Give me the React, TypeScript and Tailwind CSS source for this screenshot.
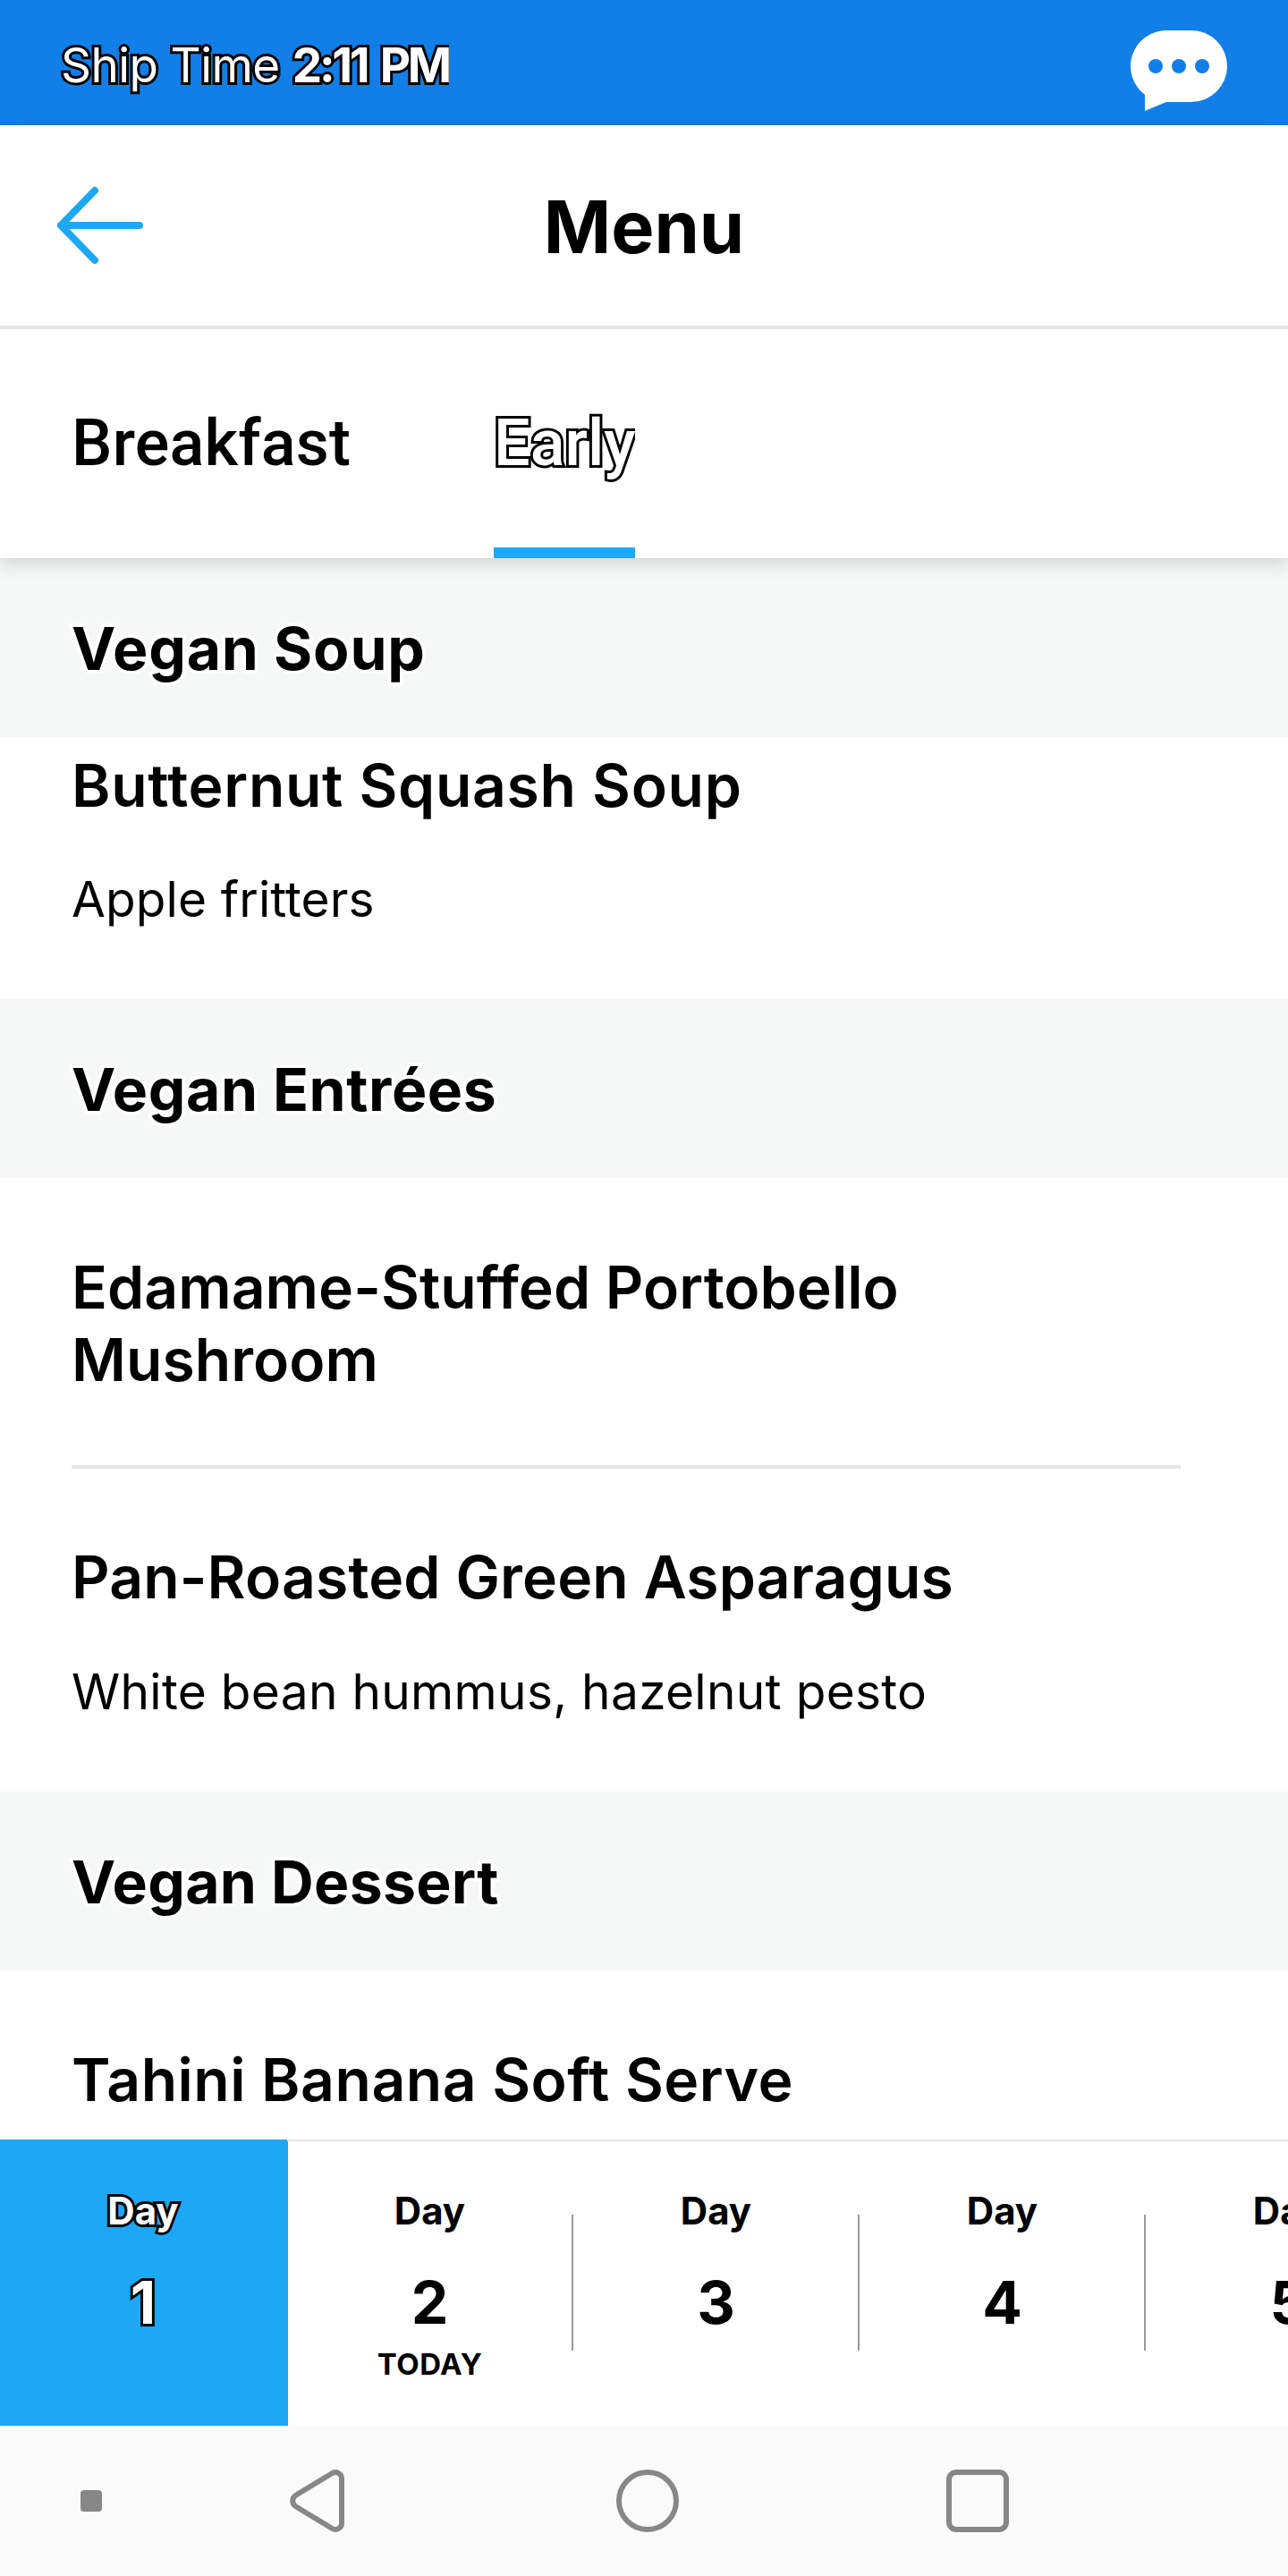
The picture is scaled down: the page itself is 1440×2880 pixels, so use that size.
import React from 'react';

const sections = [
    {
        title: "Vegan Soup",
        tracking: "tracking-[0.8px]",
        items: [
            { name: "Butternut Squash Soup", details: "Apple fritters", spacing: "pt-[14px] pb-[78px] tracking-[0.7px]", detailsSpacing: "mt-[52px] tracking-[0.1px]" },
        ]
    },
    {
        title: "Vegan Entrées",
        tracking: "tracking-[0.6px]",
        items: [
            { name: "Edamame-Stuffed Portobello Mushroom", details: "", spacing: "pt-[82px] pb-[77px] tracking-[0.05px]", detailsSpacing: "" },
            { name: "Pan-Roasted Green Asparagus", details: "White bean hummus, hazelnut pesto", spacing: "pt-[81px] pb-[78px] tracking-[0.15px]", detailsSpacing: "mt-[53px] tracking-[0.3px]" },
        ]
    },
    {
        title: "Vegan Dessert",
        tracking: "tracking-[0.3px]",
        items: [
            { name: "Tahini Banana Soft Serve", details: "", spacing: "pt-[82px] pb-[77px] tracking-[0.5px]", detailsSpacing: "" },
        ]
    },
];

const days = [
    { id: 1, active: true, today: false },
    { id: 2, active: false, today: true },
    { id: 3, active: false, today: false },
    { id: 4, active: false, today: false },
    { id: 5, active: false, today: false },
];

const ChatIcon = () => (
    <svg width="108" height="92" viewBox="0 0 108 92" fill="white">
        <path d="M40 0H68A40 40 0 0 1 68 80H40L16 90V72A40 40 0 0 1 40 0Z" />
        <circle cx="28" cy="40" r="8" fill="#127fe9" />
        <circle cx="54" cy="40" r="8" fill="#127fe9" />
        <circle cx="80" cy="40" r="8" fill="#127fe9" />
    </svg>
);

const BackArrow = () => (
    <svg width="100" height="90" viewBox="0 0 100 90" fill="none" stroke="#1ea7f4" strokeWidth="8" strokeLinecap="round" strokeLinejoin="round">
        <path d="M46 6L8 45L46 84M8 45H96" />
    </svg>
);

const App = () => {
    return (
        <div className="flex h-[2880px] w-[1440px] flex-col overflow-hidden bg-white font-['Inter',sans-serif] text-black">

            {/* Status bar */}
            <div className="flex h-[140px] shrink-0 items-center justify-between bg-[#127fe9] pl-[65px] pr-[68px]">
                <p className="overflow-hidden pt-[5px] pl-[3px] text-[53px] leading-[70px] whitespace-pre text-white [-webkit-text-stroke:6px_#000] [paint-order:stroke_fill]">
                    <span className="tracking-[-0.6px]">Ship Time </span>
                    <span className="font-bold tracking-[-3.3px] [word-spacing:5px]">2:11 PM</span>
                </p>
                <div className="pt-[20px]">
                    <ChatIcon />
                </div>
            </div>

            {/* Header and tabs */}
            <div className="relative z-10 shrink-0 bg-white shadow-[0_5px_20px_rgba(0,0,0,0.17)]">
                <div className="grid h-[228px] grid-cols-3 items-center border-b-4 border-[#e4e7e6] pl-[60px] pr-[60px]">
                    <BackArrow />
                    <h1 className="pt-[3px] text-center text-[81px] leading-[100px] font-bold">Menu</h1>
                </div>
                <div className="flex h-[256px] gap-[160px] pl-[80px] font-['Roboto',sans-serif] text-[72px] leading-[100px] font-medium">
                    <div className="w-[312px] pt-[78px] tracking-[0.2px]">Breakfast</div>
                    <div className="flex w-[158px] flex-col justify-between overflow-hidden pt-[78px]">
                        <span className="text-white [-webkit-text-stroke:6px_#000] [paint-order:stroke_fill]">Early</span>
                        <div className="h-3 bg-[#1ea7f4]" />
                    </div>
                </div>
            </div>

            {/* Menu list */}
            <div className="min-h-0 grow overflow-hidden">
                {sections.map((section) => (
                    <div key={section.title} className={section.tracking}>
                        <h2 className="h-[200px] bg-[#f6f8f8] px-[80px] pt-[61px] text-[66px] leading-[81px] font-bold [-webkit-text-stroke:7px_#fff] [paint-order:stroke_fill]">
                            {section.title}
                        </h2>
                        <div className="mr-[120px] ml-[80px] divide-y-4 divide-[#e4e7e6] tracking-normal">
                            {section.items.map((item) => (
                                <div key={item.name} className={item.spacing}>
                                    <h3 className="text-[66px] leading-[81px] font-semibold">{item.name}</h3>
                                    {item.details && (
                                        <p className={`text-[55px] leading-[68px] ${item.detailsSpacing}`}>{item.details}</p>
                                    )}
                                </div>
                            ))}
                        </div>
                    </div>
                ))}
            </div>

            <div className="flex h-[320px] shrink-0 overflow-hidden font-bold">
                {days.map((day) => (
                    <div
                        key={day.id}
                        className={day.active
                            ? "-mr-px flex w-[322px] shrink-0 bg-[#1ea7f4] text-white [-webkit-text-stroke:6px_#000] [paint-order:stroke_fill]"
                            : "flex w-[320px] shrink-0 border-t-2 border-[#e5e6ea]"}
                    >
                        <div className={day.active ? "flex grow flex-col items-center pt-[55px] pr-0.5" : "flex grow flex-col items-center pt-[53px] pr-px"}>
                            <span className="text-[42px] leading-[50px]">Day</span>
                            <span className="mt-[44px] text-[66px] leading-[66px]">{day.id}</span>
                            {day.today && <span className="mt-[19px] text-[33px] leading-[34px] tracking-[0.5px]">TODAY</span>}
                        </div>
                        {!day.active && <div className="mt-[82px] -ml-0.5 h-[152px] w-0.5 bg-[#999]" />}
                    </div>
                ))}
            </div>

            {/* System navigation */}
            <div className="flex h-[168px] shrink-0 items-center bg-[#fafafa] pl-[90px]">
                <div className="h-6 w-6 rounded bg-[#878787]" />
                <svg className="ml-[209px]" width="64" height="72" viewBox="0 0 64 72" fill="none" stroke="#878787" strokeWidth="6">
                    <path d="M48.5 5L8 29.5A7.5 7.5 0 0 0 8 42.5L48.5 67A7 7 0 0 0 59 61V11A7 7 0 0 0 48.5 5Z" />
                </svg>
                <div className="ml-[302px] h-[70px] w-[70px] rounded-full border-[6px] border-[#878787]" />
                <div className="ml-[299px] h-[70px] w-[70px] rounded-[11px] border-[6px] border-[#878787]" />
            </div>

        </div>
    );
};

export default App;
